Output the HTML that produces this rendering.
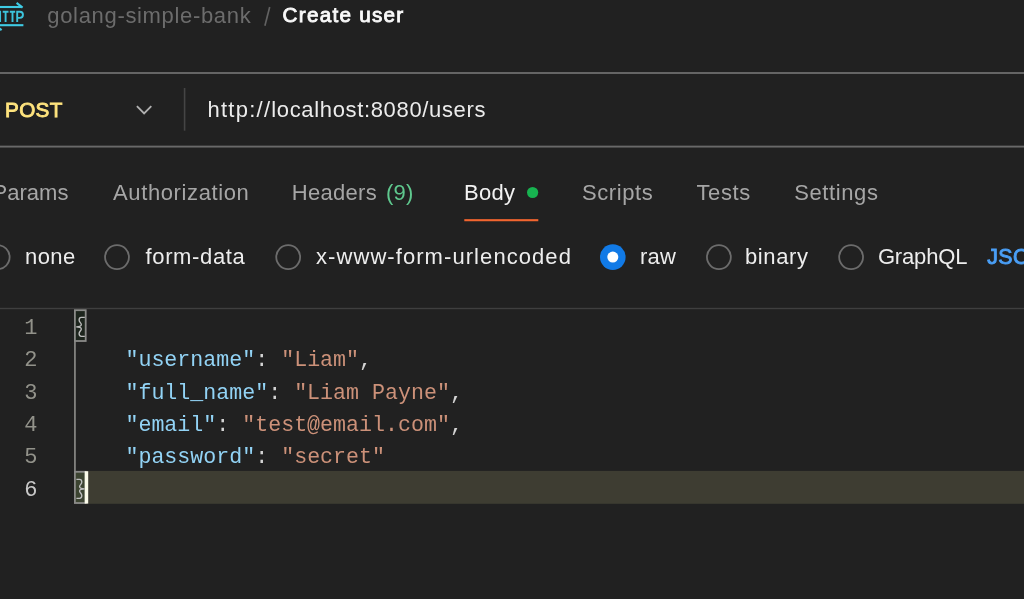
<!DOCTYPE html>
<html>
<head>
<meta charset="utf-8">
<title>Create user</title>
<style>
html,body{margin:0;padding:0;}
body{width:1024px;height:599px;overflow:hidden;background:#212121;position:relative;font-family:"Liberation Sans",sans-serif;}
.t{position:absolute;white-space:pre;line-height:22px;font-size:22px;height:22px;}
.crumb{color:#6c6c6c;}
.tab{color:#a6a6a6;}
.lab{color:#ededed;}
.ln{position:absolute;left:0;width:37.5px;text-align:right;font-family:"Liberation Mono",monospace;font-size:22px;line-height:32.4px;height:32.4px;color:#92928a;white-space:pre;}
.code{position:absolute;left:73.5px;font-family:"Liberation Mono",monospace;font-size:21.63px;line-height:32.4px;height:32.4px;white-space:pre;color:#d4d4d4;}
.k{color:#92d3f5;}
.s{color:#cc9179;}
</style>
</head>
<body>
<div id="root" style="position:absolute;left:0;top:0;width:1024px;height:599px;overflow:hidden;will-change:transform;">

<!-- HTTP icon -->
<svg style="position:absolute;left:0;top:0" width="40" height="36" viewBox="0 0 40 36">
  <g fill="none" stroke="#3fcbe4" stroke-width="2.1">
    <path d="M-2 7 H21.6"/>
    <path d="M22.6 7.6 L16.6 2.9"/>
    <path d="M23.4 25.2 H-2"/>
    <path d="M-4.9 25.2 L1.6 30.1"/>
  </g>
  <g fill="none" stroke="#3cc4dc" stroke-width="1.9">
    <!-- H -->
    <path d="M0.1 10.8 V21.9 M-4 16.3 H0.1"/>
    <!-- T -->
    <path d="M2.7 11.75 H8.5 M5.6 11.75 V21.9"/>
    <!-- T -->
    <path d="M9.8 11.75 H15.2 M12.5 11.75 V21.9"/>
    <!-- P -->
    <path d="M17.2 21.9 V11.75 H19.9 A3.05 3.05 0 0 1 19.9 17.85 H17.2"/>
  </g>
</svg>

<!-- shapes layer -->
<svg style="position:absolute;left:0;top:0" width="1024" height="599" viewBox="0 0 1024 599">
  <!-- breadcrumb slash -->
  <line x1="269.7" y1="7" x2="264.9" y2="25.7" stroke="#626262" stroke-width="1.65"/>
  <!-- url bar lines -->
  <rect x="0" y="72.05" width="1024" height="1.9" fill="#696969"/>
  <rect x="0" y="145.65" width="1024" height="1.9" fill="#696969"/>
  <rect x="183.8" y="88" width="1.6" height="42.7" fill="#454545"/>
  <!-- body tab -->
  <circle cx="532.6" cy="192.5" r="5.6" fill="#17b350"/>
  <rect x="464.3" y="219.15" width="74" height="2.1" fill="#f2652f"/>
  <!-- radios -->
  <g fill="none" stroke="#6c6c6c" stroke-width="1.8">
    <circle cx="-2.3" cy="257.1" r="11.95"/>
    <circle cx="117" cy="257.1" r="11.95"/>
    <circle cx="288.2" cy="257.1" r="11.95"/>
    <circle cx="718.9" cy="257.1" r="11.95"/>
    <circle cx="851.1" cy="257.1" r="11.95"/>
  </g>
  <circle cx="612.8" cy="257.1" r="12.8" fill="#117ae6"/>
  <circle cx="612.8" cy="257.1" r="5.5" fill="#ffffff"/>
  <!-- editor -->
  <rect x="0" y="307.8" width="1024" height="1.4" fill="#3f3f3f"/>
  <rect x="74" y="470.9" width="950" height="32.9" fill="#3e3d32"/>
  <rect x="74.05" y="341" width="1.75" height="131" fill="#868683"/>
  <rect x="74.9" y="310.2" width="10.8" height="30.8" fill="#1d251d" stroke="#8b8b89" stroke-width="1.8"/>
  <rect x="74.9" y="471.8" width="10.8" height="31.2" fill="#3c4431" stroke="#8b8b89" stroke-width="1.8"/>
  <rect x="84.7" y="471.2" width="3.5" height="32.4" fill="#fbfbea"/>
  <!-- braces -->
  <g fill="none" stroke="#bebebe" stroke-width="1.35">
    <path d="M84.8 317.3 H81.3 C79.7 317.3 79.1 318.5 79.1 320 C79.1 322.3 81.3 322.8 81.3 324.6 C81.3 326.2 79.6 326.8 76.2 326.8 C79.6 326.8 81.3 327.4 81.3 329 C81.3 330.8 79.1 331.3 79.1 333.6 C79.1 335.1 79.7 336.4 81.3 336.4 H84.8"/>
    <path d="M76.4 479.3 H79.6 C81.2 479.3 81.8 480.5 81.8 482 C81.8 484.3 79.6 484.8 79.6 486.6 C79.6 488.2 81.3 488.8 84.7 488.8 C81.3 488.8 79.6 489.4 79.6 491 C79.6 492.8 81.8 493.3 81.8 495.6 C81.8 497.1 81.2 498.4 79.6 498.4 H76.4"/>
  </g>
</svg>

<!-- breadcrumb -->
<span class="t crumb" style="left:47.3px;top:4.5px;letter-spacing:0.67px;">golang-simple-bank</span>
<span class="t" style="left:282.6px;top:4.2px;font-weight:400;-webkit-text-stroke:0.85px #fafafa;color:#fafafa;font-size:20.7px;letter-spacing:1.25px;">Create user</span>

<!-- URL bar -->
<span class="t" style="left:5px;top:99.1px;font-weight:400;-webkit-text-stroke:0.85px #ffe47e;color:#ffe47e;font-size:20.7px;letter-spacing:0.35px;">POST</span>
<svg style="position:absolute;left:134px;top:102px" width="20" height="16" viewBox="0 0 20 16">
  <path d="M2.9 4.2 L10.1 11.4 L17.3 4.2" fill="none" stroke="#b0b0b0" stroke-width="1.85"/>
</svg>
<span class="t" style="left:207.5px;top:98.5px;color:#ececec;letter-spacing:0.65px;"><span style="letter-spacing:1.25px;">http://</span>localhost:8080/users</span>

<!-- tabs -->
<span class="t tab" style="left:-7.4px;top:181.5px;letter-spacing:0px;">Params</span>
<span class="t tab" style="left:113px;top:181.5px;letter-spacing:0.62px;">Authorization</span>
<span class="t tab" style="left:291.7px;top:181.5px;letter-spacing:0.3px;">Headers</span>
<span class="t" style="left:386px;top:181.5px;color:#5fc88e;letter-spacing:0.2px;">(9)</span>
<span class="t" style="left:464px;top:181.5px;color:#f2f2f2;letter-spacing:0.25px;">Body</span>
<span class="t tab" style="left:582px;top:181.5px;letter-spacing:0.6px;">Scripts</span>
<span class="t tab" style="left:696.5px;top:181.5px;letter-spacing:0.6px;">Tests</span>
<span class="t tab" style="left:794.2px;top:181.5px;letter-spacing:0.6px;">Settings</span>

<!-- radios -->
<span class="t lab" style="left:25px;top:246.4px;letter-spacing:0.43px;">none</span>
<span class="t lab" style="left:145.5px;top:246.4px;letter-spacing:0.64px;">form-data</span>
<span class="t lab" style="left:316px;top:246.4px;letter-spacing:1.07px;">x-www-form-urlencoded</span>
<span class="t lab" style="left:639.9px;top:246.4px;letter-spacing:0.3px;">raw</span>
<span class="t lab" style="left:745px;top:246.4px;letter-spacing:0.6px;">binary</span>
<span class="t lab" style="left:877.9px;top:246.4px;letter-spacing:-0.15px;">GraphQL</span>
<span class="t" style="left:987.2px;top:245.5px;color:#4a9ff6;font-weight:400;-webkit-text-stroke:0.9px #4a9ff6;font-size:21.3px;letter-spacing:0.5px;">JSON</span>

<!-- editor: line numbers + code -->
<div class="ln" style="top:312.8px;">1</div>
<div class="ln" style="top:345.2px;">2</div>
<div class="ln" style="top:377.6px;">3</div>
<div class="ln" style="top:410.0px;">4</div>
<div class="ln" style="top:442.4px;">5</div>
<div class="ln" style="top:474.8px;color:#c8c8c8;">6</div>

<div class="code" style="top:344.2px;">    <span class="k">"username"</span>: <span class="s">"Liam"</span>,</div>
<div class="code" style="top:376.6px;">    <span class="k">"full_name"</span>: <span class="s">"Liam Payne"</span>,</div>
<div class="code" style="top:409.0px;">    <span class="k">"email"</span>: <span class="s">"test@email.com"</span>,</div>
<div class="code" style="top:441.4px;">    <span class="k">"password"</span>: <span class="s">"secret"</span></div>

</div>
</body>
</html>
